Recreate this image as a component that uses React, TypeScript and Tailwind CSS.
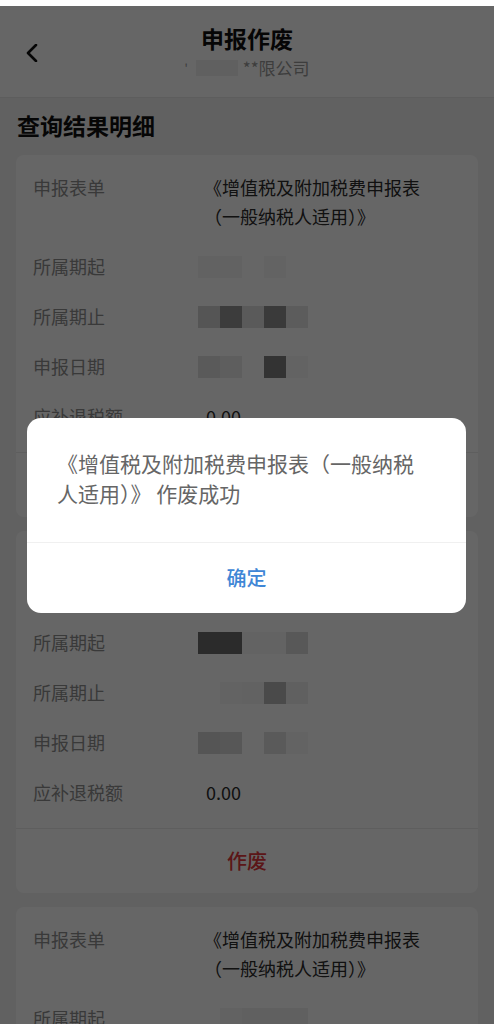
import React from 'react';

const FONT = { fontFamily: '"Noto Sans CJK SC", "Noto Sans", sans-serif' };

type Cell = string | null;

interface RecordItem {
  id: number;
  start: Cell[];
  end: Cell[];
  date: Cell[];
}

// mosaic cells that hide the dates (22px squares)
const RECORDS: RecordItem[] = [
  {
    id: 1,
    start: ['bg-[#f4f4f4]', 'bg-[#f4f4f4]', null, 'bg-[#f8f8f8]', null],
    end: ['bg-[#d5d5d5]', 'bg-[#969696]', 'bg-[#e1e1e1]', 'bg-[#919191]', 'bg-[#e6e6e6]'],
    date: ['bg-[#e0e0e0]', 'bg-[#ebebeb]', null, 'bg-[#808080]', 'bg-[#f8f8f8]'],
  },
  {
    id: 2,
    start: ['bg-[#6b6b6b]', 'bg-[#6b6b6b]', 'bg-[#f8f8f8]', 'bg-[#f8f8f8]', 'bg-[#dcdcdc]'],
    end: [null, 'bg-[#f8f8f8]', 'bg-[#f4f4f4]', 'bg-[#b9b9b9]', 'bg-[#f0f0f0]'],
    date: ['bg-[#d5d5d5]', 'bg-[#d9d9d9]', null, 'bg-[#e1e1e1]', 'bg-[#f8f8f8]'],
  },
  {
    id: 3,
    start: [null, 'bg-[#f4f4f4]', 'bg-[#f0f0f0]', 'bg-[#f0f0f0]', 'bg-[#f0f0f0]'],
    end: [null, null, null, null, null],
    date: [null, null, null, null, null],
  },
];

const Mosaic: React.FC<{ cells: Cell[] }> = ({ cells }) => (
  <div className="flex h-[29px] items-center -ml-[6px]">
    {cells.map((c, i) => (
      <div key={i} className={`h-[22px] w-[22px] ${c ?? 'bg-transparent'}`} />
    ))}
  </div>
);

const Row: React.FC<{ label: string; children: React.ReactNode }> = ({ label, children }) => (
  <div className="flex">
    <div className="w-[171px] shrink-0 text-[18px] leading-[29px] text-[#8f8f8f]">{label}</div>
    <div className="w-[240px] text-[18px] leading-[29px] text-[#2b2b2b]">{children}</div>
  </div>
);

const RecordCard: React.FC<{ item: RecordItem }> = ({ item }) => (
  <div className="mx-[16px] rounded-[8px] bg-white">
    <div className="flex flex-col gap-[21px] px-[17px] pt-[18px] pb-[21px]">
      <Row label="申报表单">《增值税及附加税费申报表（一般纳税人适用）》</Row>
      <Row label="所属期起">
        <Mosaic cells={item.start} />
      </Row>
      <Row label="所属期止">
        <Mosaic cells={item.end} />
      </Row>
      <Row label="申报日期">
        <Mosaic cells={item.date} />
      </Row>
      <Row label="应补退税额">
        <span className="pl-[2px]">0.00</span>
      </Row>
    </div>
    <button className="flex h-[65px] w-full items-center justify-center border-t border-[#ececec] text-[20px] font-medium text-[#e4393c]">
      作废
    </button>
  </div>
);

export default function App() {
  return (
    <div className="relative h-[1024px] w-full overflow-hidden bg-[#f2f2f2]" style={FONT}>
      {/* Header */}
      <div className="grid h-[98px] grid-cols-[60px_1fr_60px] border-b border-[#e8e8e8] bg-white">
        <div className="flex items-start pl-[24px] pt-[44px]">
          <svg width="16" height="18" viewBox="0 0 16 18" fill="none">
            <polyline points="12,1 4,9 12,17" stroke="#111" strokeWidth="2.6" strokeLinecap="round" strokeLinejoin="round" />
          </svg>
        </div>
        <div className="flex flex-col items-center pt-[23px]">
          <div className="text-[23px] font-bold leading-[30px] text-[#111]">申报作废</div>
          <div className="mt-[3px] flex items-center text-[17px] leading-[24px] text-[#999]">
            <span className="mr-[8px] text-[12px]">'</span>
            <span className="mr-[5px] h-[16px] w-[42px] bg-[#f0f0f0]" />
            <span>**限公司</span>
          </div>
        </div>
        <div />
      </div>

      {/* Section title */}
      <div className="px-[17px] pt-[13px] pb-[16px] text-[23px] font-bold leading-[28px] text-[#111]">查询结果明细</div>

      <div className="flex flex-col gap-[14px]">
        {RECORDS.map((r) => (
          <RecordCard key={r.id} item={r} />
        ))}
      </div>

      {/* Mask */}
      <div className="absolute inset-x-0 top-[6px] bottom-0 bg-black/60" />

      {/* Dialog */}
      <div className="absolute left-[27px] top-[418px] w-[439px] overflow-hidden rounded-[14px] bg-white">
        <div className="pl-[30px] pr-[35px] pt-[30px] pb-[34px] text-[21px] leading-[30px] text-[#666]">
          《增值税及附加税费申报表（一般纳税人适用）》 作废成功
        </div>
        <button className="flex h-[71px] w-full items-center justify-center border-t border-[#f0f0f0] text-[20px] font-medium text-[#3f87d6]">
          确定
        </button>
      </div>
    </div>
  );
}
